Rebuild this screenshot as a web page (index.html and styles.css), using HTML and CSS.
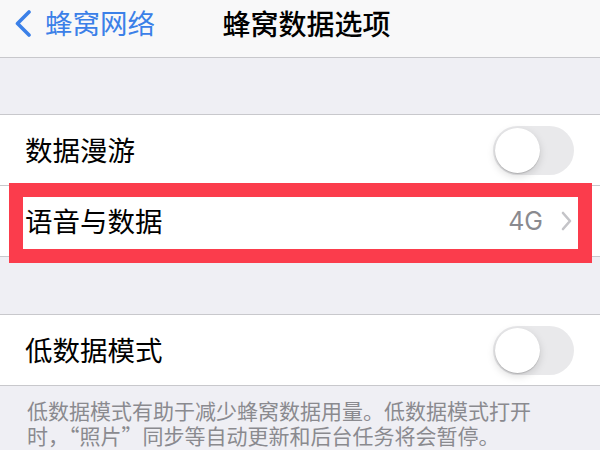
FILE: index.html
```html
<!DOCTYPE html>
<html lang="zh-CN">
<head>
<meta charset="utf-8">
<title>蜂窝数据选项</title>
<link rel="stylesheet" href="styles.css">
</head>
<body>
<header class="nav">
  <div class="nav-back">
    <svg class="back-chevron" width="20" height="27" viewBox="0 0 20 27" aria-hidden="true">
      <path d="M16 2 L4.5 13.5 L16 25" fill="none" stroke="#3b80e8" stroke-width="3.6" stroke-linecap="round" stroke-linejoin="round"/>
    </svg>
    <span class="back-text">蜂窝网络</span>
  </div>
  <div class="nav-title">蜂窝数据选项</div>
  <div class="nav-spacer"></div>
</header>

<section class="group group-first">
  <div class="row">
    <span class="row-label">数据漫游</span>
    <span class="switch"><span class="knob"></span></span>
  </div>
  <div class="row row-link">
    <span class="row-label">语音与数据</span>
    <span class="row-value">4G</span>
    <svg class="chevron" width="11" height="20" viewBox="0 0 11 20" aria-hidden="true">
      <path d="M2 2 L9 10 L2 18" fill="none" stroke="#c4c4c8" stroke-width="2.6" stroke-linecap="round" stroke-linejoin="round"/>
    </svg>
    <div class="highlight"></div>
  </div>
</section>

<section class="group group-second">
  <div class="row">
    <span class="row-label">低数据模式</span>
    <span class="switch"><span class="knob"></span></span>
  </div>
</section>
<p class="footer">低数据模式有助于减少蜂窝数据用量。低数据模式打开时，“照片”同步等自动更新和后台任务将会暂停。</p>
</body>
</html>
```

FILE: styles.css
```css
* { box-sizing: border-box; }

html, body {
  margin: 0;
  padding: 0;
}

body {
  width: 600px;
  height: 450px;
  overflow: hidden;
  background: #efeff4;
  font-family: "Noto Sans CJK SC", "Noto Sans", sans-serif;
  color: #000;
}

.nav {
  height: 58px;
  background: #f8f8f9;
  border-bottom: 1px solid #c8c8cc;
  display: grid;
  grid-template-columns: 1fr auto 1fr;
  align-items: center;
  padding: 0 0 11px 13px;
}

.nav-back {
  display: flex;
  align-items: center;
  gap: 12px;
  color: #3b80e8;
}

.back-chevron { display: block; }

.back-text {
  font-size: 27.5px;
  line-height: 1;
}

.nav-title {
  font-size: 28px;
  line-height: 1;
  font-weight: 500;
}

.group {
  background: #fff;
  border-top: 1px solid #c8c8cc;
  border-bottom: 1px solid #c8c8cc;
}

.group-first { margin-top: 56px; }
.group-second { margin-top: 57px; }

.row {
  height: 70px;
  display: flex;
  align-items: center;
  padding: 0 26px 0 25px;
  position: relative;
}

.group-first .row + .row {
  height: 71px;
  border-top: 1px solid #c8c8cc;
}

.row-label {
  font-size: 27.5px;
  line-height: 1;
  flex: 1;
}

.row-link { padding-right: 28px; }

.row-value {
  font-family: "Inter", "Noto Sans", sans-serif;
  font-size: 25px;
  line-height: 1;
  color: #8a8a8f;
  margin-right: 18px;
}

.chevron { display: block; }

.switch {
  width: 81px;
  height: 49px;
  border-radius: 25px;
  background: #e9e9eb;
  position: relative;
  flex: none;
}

.knob {
  position: absolute;
  left: 2px;
  top: 2px;
  width: 45px;
  height: 45px;
  border-radius: 50%;
  background: #fff;
  box-shadow: 0 3px 8px rgba(0, 0, 0, 0.15), 0 1px 1px rgba(0, 0, 0, 0.16);
}

.highlight {
  position: absolute;
  left: 9px;
  right: 8px;
  top: -3px;
  bottom: -7px;
  border: 14px solid #fb3c4c;
  pointer-events: none;
}

.footer {
  margin: 0;
  padding: 12px 0 0 27px;
  width: 545px;
  font-size: 21px;
  line-height: 25px;
  color: #8a8a8f;
}
```
